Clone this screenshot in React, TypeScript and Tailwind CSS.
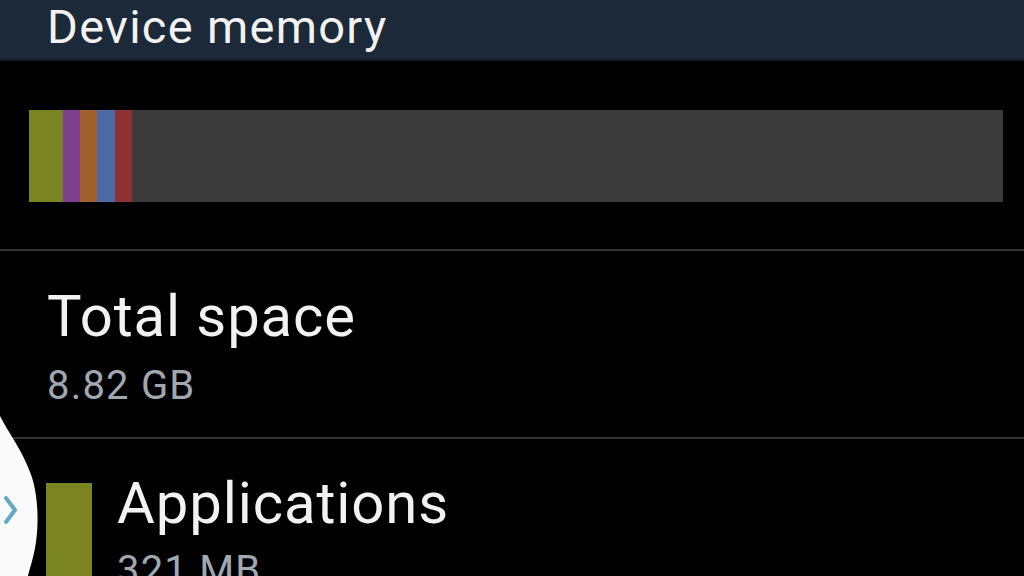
const segments = [
  { color: "bg-[#7b8423]", width: "w-[34px]" },
  { color: "bg-[#7e3f8c]", width: "w-[17px]" },
  { color: "bg-[#a0602c]", width: "w-[17px]" },
  { color: "bg-[#4b6aa6]", width: "w-[18px]" },
  { color: "bg-[#8c3232]", width: "w-[17px]" },
];

export default function App() {
  return (
    <div
      className="relative w-[1024px] h-[576px] overflow-hidden bg-black text-[#f2f2f2]"
      style={{ fontFamily: "Roboto, 'Noto Sans', sans-serif" }}
    >
      {/* Header */}
      <header className="h-[61px] bg-[#1c2938] border-b-2 border-[#141d27] px-[47px] pt-[3px]">
        <h1 className="text-[47px] leading-none font-normal tracking-[1.3px]">Device memory</h1>
      </header>

      {/* Usage bar */}
      <div className="pt-[49px] pb-[47px] pl-[29px] pr-[21px]">
        <div className="flex h-[92px] bg-[#3b3b3b]">
          {segments.map((s, i) => (
            <div key={i} className={`${s.color} ${s.width} h-full`} />
          ))}
        </div>
      </div>

      <div className="h-[2px] bg-[#343434]" />

      {/* Total space */}
      <div className="h-[186px] px-[47px] pt-[36px]">
        <div className="text-[58px] leading-none tracking-[0.9px]">Total space</div>
        <div className="mt-[21px] text-[40px] leading-none tracking-[1.2px] text-[#a0a9b0]">8.82 GB</div>
      </div>

      <div className="h-[2px] bg-[#343434]" />

      {/* Applications */}
      <div className="flex gap-[25px] pl-[46px] pt-[44px]">
        <div className="w-[46px] h-[120px] bg-[#7a8420]" />
        <div className="-mt-[9px]">
          <div className="text-[58px] leading-none tracking-[0.9px]">Applications</div>
          <div className="mt-[19px] text-[40px] leading-none tracking-[1.2px] text-[#a0a9b0]">321 MB</div>
        </div>
      </div>

      {/* Side pull tab */}
      <svg
        className="absolute left-0 top-[410px]"
        width="60"
        height="170"
        viewBox="0 0 60 170"
      >
        <path
          d="M0 6 C8 22 22 40 30 62 C39 84 39 118 35 138 C33 150 29 160 27 170 L0 170 Z"
          fill="#fafafa"
        />
        <path
          d="M6 88 L15 100 L6 112"
          fill="none"
          stroke="#62a8c9"
          strokeWidth="4"
          strokeLinecap="round"
          strokeLinejoin="round"
        />
      </svg>
    </div>
  );
}
